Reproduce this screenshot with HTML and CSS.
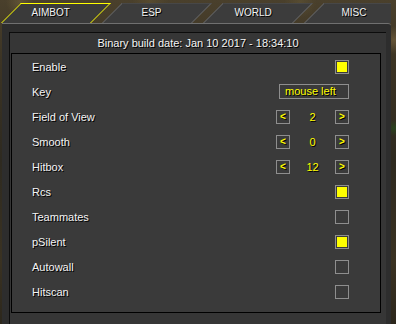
FILE: index.html
```html
<!DOCTYPE html>
<html>
<head>
<meta charset="utf-8">
<link rel="stylesheet" href="styles.css">
</head>
<body>
<div class="app">
  <div class="tabs">
    <div class="tab active"><span>AIMBOT</span></div>
    <div class="tab"><span>ESP</span></div>
    <div class="tab"><span>WORLD</span></div>
    <div class="tab"><span>MISC</span></div>
  </div>
  <div class="panel">
    <div class="inner">
      <div class="build">Binary build date: Jan 10 2017 - 18:34:10</div>
      <div class="content">
        <div class="row"><span class="label">Enable</span><span class="check on"></span></div>
        <div class="row"><span class="label">Key</span><span class="keybox">mouse left</span></div>
        <div class="row"><span class="label">Field of View</span>
          <span class="stepper"><span class="btn">&lt;</span><span class="val">2</span><span class="btn">&gt;</span></span></div>
        <div class="row"><span class="label">Smooth</span>
          <span class="stepper"><span class="btn">&lt;</span><span class="val">0</span><span class="btn">&gt;</span></span></div>
        <div class="row"><span class="label">Hitbox</span>
          <span class="stepper"><span class="btn">&lt;</span><span class="val">12</span><span class="btn">&gt;</span></span></div>
        <div class="row"><span class="label">Rcs</span><span class="check on"></span></div>
        <div class="row"><span class="label">Teammates</span><span class="check"></span></div>
        <div class="row"><span class="label">pSilent</span><span class="check on"></span></div>
        <div class="row"><span class="label">Autowall</span><span class="check"></span></div>
        <div class="row"><span class="label">Hitscan</span><span class="check"></span></div>
      </div>
    </div>
  </div>
</div>
</body>
</html>
```
FILE: styles.css
```css
* { box-sizing: border-box; }
html, body { margin: 0; padding: 0; }
body {
  width: 396px;
  height: 324px;
  overflow: hidden;
  font-family: "Liberation Sans", Arial, sans-serif;
  background:
    radial-gradient(circle at 20px 2px, rgba(110,95,60,0.6), transparent 14px),
    radial-gradient(circle at 150px 1px, rgba(95,82,50,0.6), transparent 18px),
    radial-gradient(circle at 300px 2px, rgba(100,88,55,0.5), transparent 16px),
    radial-gradient(circle at 394px 128px, rgba(40,70,30,0.9), transparent 8px),
    radial-gradient(circle at 394px 40px, rgba(110,92,60,0.8), transparent 14px),
    linear-gradient(180deg, #4a402c 0px, #3c3424 60px, #2e2a20 160px, #3a3222 260px, #2c271c 324px);
}
.app { width: 391px; }
.tabs {
  display: flex;
  gap: 11px;
  padding: 3px 0 0 11px;
  height: 23px;
  overflow: hidden;
}
.tab {
  flex: 0 0 90px;
  height: 20px;
  background: #3c3c3c;
  border-left: 1px solid #6c6c6c;
  border-right: 1px solid #6c6c6c;
  border-top: 1px solid #474747;
  transform: skewX(-45deg);
  display: flex;
  justify-content: center;
}
.tab.active {
  border-color: #ffff00;
  background: #3a3a3a;
}
.tab span {
  display: block;
  transform: skewX(45deg);
  font-size: 10px;
  line-height: 17px;
  color: #f2f2f2;
  text-shadow: 1px 1px 0 #000;
  padding-right: 9px;
  white-space: nowrap;
}
.panel {
  margin-left: 2px;
  height: 301px;
  background: #2d2d2d;
  border-top: 1px solid #707070;
  border-top-right-radius: 3px;
  padding: 8px 5px 0 7px;
}
.inner {
  height: 300px;
  background: #363636;
  border-top: 1px solid #0c0c0c;
  border-left: 1px solid #0c0c0c;
}
.build {
  height: 20px;
  text-align: center;
  font-size: 11px;
  line-height: 20px;
  color: #f4f4f4;
  text-shadow: 1px 1px 0 #000;
}
.content {
  margin-left: 1px;
  width: 370px;
  height: 260px;
  background: #3a3a3a;
  border: 1px solid #000;
  padding: 0 31px 0 20px;
}
.row {
  height: 25px;
  display: flex;
  align-items: center;
  justify-content: space-between;
}
.label {
  font-size: 11px;
  color: #f4f4f4;
  text-shadow: 1px 1px 0 #000;
}
.check {
  width: 14px;
  height: 14px;
  border: 1px solid #8e8e8e;
  padding: 1px;
}
.check.on::after {
  content: "";
  display: block;
  width: 10px;
  height: 10px;
  background: #ffff00;
}
.keybox {
  width: 70px;
  height: 15px;
  border: 1px solid #8e8e8e;
  padding-left: 5px;
  font-size: 11px;
  line-height: 13px;
  color: #ffff00;
  text-shadow: 1px 1px 0 #000;
}
.stepper {
  width: 73px;
  display: flex;
  align-items: center;
}
.btn {
  width: 14px;
  height: 14px;
  border: 1px solid #8e8e8e;
  font-size: 10px;
  font-weight: bold;
  line-height: 11px;
  text-align: center;
  color: #ffff00;
  text-shadow: 1px 1px 0 #000;
}
.val {
  flex: 1;
  text-align: center;
  font-size: 11px;
  color: #ffff00;
  text-shadow: 1px 1px 0 #000;
}
```
